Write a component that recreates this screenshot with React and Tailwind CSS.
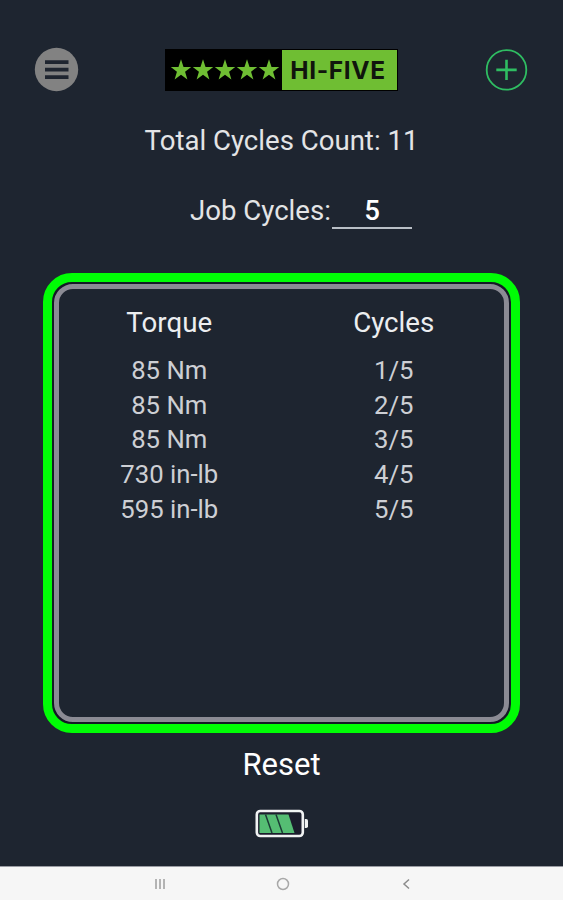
const cycles = [
  { torque: '85 Nm', count: '1/5' },
  { torque: '85 Nm', count: '2/5' },
  { torque: '85 Nm', count: '3/5' },
  { torque: '730 in-lb', count: '4/5' },
  { torque: '595 in-lb', count: '5/5' }
]

const Star = () => (
  <svg viewBox="0 0 20 20" className="w-[22px] h-[22px]" fill="#6fbe33">
    <path d="M10 .3 L12.3 7.2 H19.3 L13.7 11.5 L15.8 18.6 L10 14.4 L4.2 18.6 L6.3 11.5 L.7 7.2 H7.7 Z" />
  </svg>
)

const Logo = () => (
  <div className="flex w-[233px] h-[42px] mr-[2px] bg-black pt-px pr-px pb-px">
    <div className="flex items-center w-[117px] pl-[5px] shrink-0">
      {[0, 1, 2, 3, 4].map(i => (
        <Star key={i} />
      ))}
    </div>
    <div className="flex-1 flex items-center justify-center bg-[#6fbe33] pr-[2px] pt-[2px] font-['Inter',sans-serif] font-bold text-[24.5px] leading-none tracking-[0.6px] text-[#10150d] whitespace-nowrap">
      HI-FIVE
    </div>
  </div>
)

const Header = () => (
  <header className="flex items-center justify-between h-[92px] pt-[47px] pl-[34px] pr-[35px]">
    <button aria-label="Menu">
      <svg width="45" height="45" viewBox="0 0 45 45">
        <circle cx="22.5" cy="22.5" r="21.7" fill="#828282" />
        <path d="M11 15.2h23.5M11 22.7h23.5M11 30.2h23.5" stroke="#1f2530" strokeWidth="3.8" />
      </svg>
    </button>
    <Logo />
    <button aria-label="Add">
      <svg width="43" height="43" viewBox="0 0 43 43" fill="none" stroke="#2fbd62">
        <circle cx="21.5" cy="21.9" r="19.8" strokeWidth="1.8" />
        <path d="M11.3 21.9h20.4M21.5 11.7v20.4" strokeWidth="2.6" />
      </svg>
    </button>
  </header>
)

const CycleTable = () => (
  <div className="mx-auto mt-[44px] w-[477px] h-[460px] rounded-[29px] border-[9px] border-[#00fd05] bg-[#141925] p-[2px]">
    <div className="h-full rounded-[19px] border-[5px] border-[#8b8b94] bg-[#1e2530] pt-[16px]">
      <div className="-mx-[2px] grid grid-cols-2 text-center text-[27.7px] leading-[36px] text-[#eceef0]">
        <div>Torque</div>
        <div>Cycles</div>
      </div>
      <div className="-mx-[2px] mt-[12px] text-[25.7px] leading-[34.7px] text-[#cdcfd4]">
        {cycles.map(row => (
          <div key={row.count} className="grid grid-cols-2 text-center">
            <div>{row.torque}</div>
            <div>{row.count}</div>
          </div>
        ))}
      </div>
    </div>
  </div>
)

const Battery = () => (
  <svg width="56" height="32" viewBox="0 0 56 32" className="mx-auto block">
    <rect x="2.8" y="4" width="46" height="25" rx="3.5" fill="#1b1d2c" stroke="#f1f3f3" strokeWidth="2.6" />
    <path d="M50.8 12h1.4q1.8 0 1.8 1.8v5.4q0 1.8-1.8 1.8h-1.4z" fill="#f1f3f3" />
    <path d="M5.5 7.5h29l6 18.5H5.5z" fill="#55bd73" />
    <path d="M11.5 7.5l6.5 18.5M22 7.5l6.5 18.5" stroke="#1b3a35" strokeWidth="1.5" />
  </svg>
)

const NavBar = () => (
  <nav className="flex items-center justify-center gap-[107px] h-[34px] pl-[2px] border-t border-[#9a9ca3] bg-[#f6f6f6]">
    <svg width="16" height="16" viewBox="0 0 16 16" fill="none" stroke="#a3a3a3" strokeWidth="1.6">
      <path d="M4 3v10M8 3v10M12 3v10" />
    </svg>
    <svg width="16" height="16" viewBox="0 0 16 16" fill="none" stroke="#a8a8a8" strokeWidth="1.5">
      <circle cx="8" cy="8" r="5.5" />
    </svg>
    <svg width="16" height="16" viewBox="0 0 16 16" fill="none" stroke="#8c8c8c" strokeWidth="1.5">
      <path d="M11 3.5L6 8l5 4.5" />
    </svg>
  </nav>
)

const App = () => {
  return (
    <div className="flex flex-col w-[563px] h-[900px] overflow-hidden bg-[#1e2530] font-['Roboto',sans-serif]">
      <Header />
      <div className="mt-[31px] text-center text-[27.6px] leading-[36px] text-[#e3e4e6]">
        Total Cycles Count: 11
      </div>
      <div className="mt-[31px] ml-[190px] flex h-[39px] text-[27.6px] leading-[41px] text-[#e3e4e6]">
        <span className="w-[142px] whitespace-nowrap">Job Cycles:</span>
        <span className="w-[80px] border-b-2 border-[#b9bfc6] text-center font-medium text-white">5</span>
      </div>
      <CycleTable />
      <button className="mx-auto mt-[14px] block text-[31px] leading-[36px] text-white">Reset</button>
      <div className="mt-[24px]">
        <Battery />
      </div>
      <div className="mt-auto">
        <NavBar />
      </div>
    </div>
  )
}

export default App
